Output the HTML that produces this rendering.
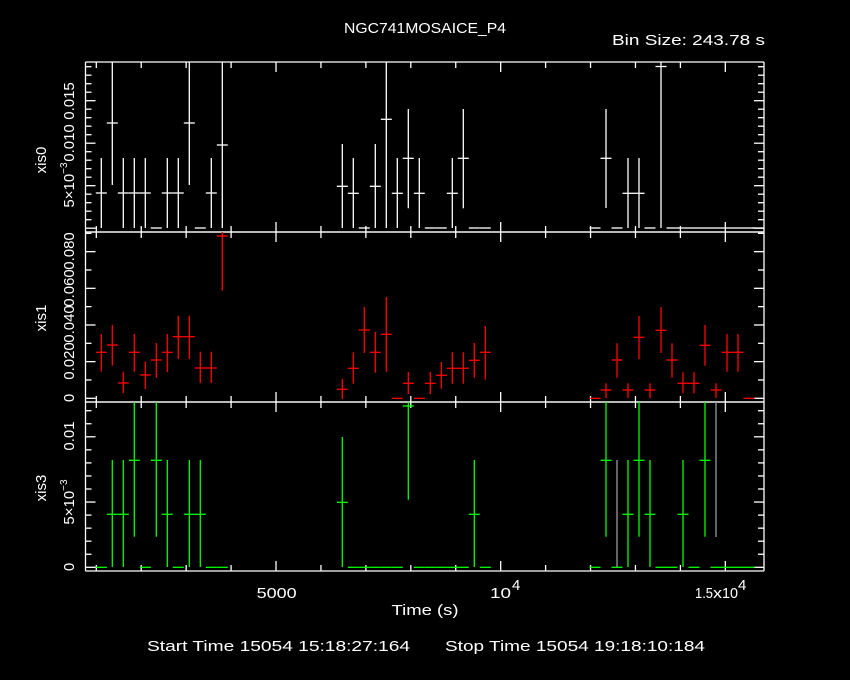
<!DOCTYPE html>
<html><head><meta charset="utf-8"><style>
html,body{margin:0;padding:0;background:#000;width:850px;height:680px;overflow:hidden}
svg{display:block}
text{font-family:"Liberation Sans",sans-serif;fill:#fff;font-size:15px}
</style></head><body>
<svg id="s" width="850" height="680" viewBox="0 0 850 680" xmlns="http://www.w3.org/2000/svg">
<text x="425" y="33" text-anchor="middle" textLength="162" lengthAdjust="spacingAndGlyphs">NGC741MOSAICE_P4</text>
<text x="612" y="45" textLength="153" lengthAdjust="spacingAndGlyphs">Bin Size: 243.78 s</text>
<text x="276.7" y="598" text-anchor="middle" textLength="40" lengthAdjust="spacingAndGlyphs">5000</text>
<text x="490" y="598" textLength="21" lengthAdjust="spacingAndGlyphs">10</text><text x="512" y="590" font-size="10">4</text>
<text x="695" y="598" textLength="18" lengthAdjust="spacingAndGlyphs">1.5</text>
<text x="713" y="598" textLength="9" lengthAdjust="spacingAndGlyphs">x</text>
<text x="722" y="598" textLength="16" lengthAdjust="spacingAndGlyphs">10</text>
<text x="738" y="590" font-size="10">4</text>
<text x="425" y="615" text-anchor="middle" textLength="67" lengthAdjust="spacingAndGlyphs">Time (s)</text>
<text x="147" y="651" textLength="263" lengthAdjust="spacingAndGlyphs">Start Time 15054 15:18:27:164</text>
<text x="445" y="651" textLength="260" lengthAdjust="spacingAndGlyphs">Stop Time 15054 19:18:10:184</text>
<text transform="translate(46,160) rotate(-90)" text-anchor="middle">xis0</text>
<text transform="translate(46,318) rotate(-90)" text-anchor="middle">xis1</text>
<text transform="translate(46,488) rotate(-90)" text-anchor="middle">xis3</text>
<text transform="translate(74,185) rotate(-90)" text-anchor="middle">5×10<tspan font-size="10" dy="-7">−3</tspan></text>
<text transform="translate(74,143) rotate(-90)" text-anchor="middle">0.010</text>
<text transform="translate(74,101) rotate(-90)" text-anchor="middle">0.015</text>
<text transform="translate(74,398) rotate(-90)" text-anchor="middle">0</text>
<text transform="translate(74,361) rotate(-90)" text-anchor="middle">0.020</text>
<text transform="translate(74,324) rotate(-90)" text-anchor="middle">0.040</text>
<text transform="translate(74,288) rotate(-90)" text-anchor="middle">0.060</text>
<text transform="translate(74,251) rotate(-90)" text-anchor="middle">0.080</text>
<text transform="translate(74,567) rotate(-90)" text-anchor="middle">0</text>
<text transform="translate(74,502) rotate(-90)" text-anchor="middle">5×10<tspan font-size="10" dy="-7">−3</tspan></text>
<text transform="translate(74,436) rotate(-90)" text-anchor="middle">0.01</text>
<g id="g" stroke-width="1.3" fill="none"></g>
</svg>
<script>
var g=document.getElementById('g'),o='';
function L(x1,y1,x2,y2,c){o+='<line x1="'+x1+'" y1="'+y1+'" x2="'+x2+'" y2="'+y2+'" stroke="'+c+'"/>';}
var X0=85.5,X1=764;
[[62,232],[232,402],[402,571]].forEach(function(p){
 L(X0,p[0],X1,p[0],'#fff');L(X0,p[1],X1,p[1],'#fff');L(X0,p[0],X0,p[1],'#fff');L(X1,p[0],X1,p[1],'#fff');
 for(var k=0;k<16;k++){var x=96.3+44.93*k;if(x>X1)break;var maj=(k==4||k==9||k==14);var l=maj?10:6;
  L(x,p[0],x,p[0]+l,'#fff');L(x,p[1],x,p[1]-l,'#fff');}
});
function yt(z,step,n,majEvery,top,bot){for(var i=0;i<n;i++){var y=z-step*i;if(y<top-0.5)break;if(y>bot)continue;var l=(i%majEvery==0)?10:6;L(X0,y,X0+l,y,'#fff');L(X1,y,X1-l,y,'#fff');}}
yt(228.2,8.5,30,5,62,232);
yt(398.3,18.33,10,2,232,402);
yt(567.3,13.05,20,5,402,571);
function P(x,y,t,b,c){L(x-5.5,y,x+5.5,y,c);if(t!=null)L(x,t,x,b,c);}
var W='#fff',R='#f00',G='#0f0';
var p1=[[101.3,193,158,228],[112.3,123,62,185],[123.3,193,158,228],[134.3,193,158,228],[145.3,193,158,228],[156.3,228],[167.3,193,158,228],[178.3,193,158,228],[189.3,123,62,185],[200.3,228],[211.3,193,158,228],[222.3,145,62,228],
[342.3,186.3,144,228],[353.3,193.3,158,228],[364.3,228],[375.3,186.3,144,228],[386.3,119.3,62,228],[397.3,193.3,158,228],[408.3,158.3,109,208.3],[419.3,193.3,158,228],[430.3,228],[441.3,228],[452.3,193.3,158,228],[463.3,158.3,109,208.3],[474.3,228],[485.3,228],
[595,228],[606,158.3,109,208],[617,228],[628,193.3,158,228],[639,193.3,158,228],[650,228],[661,66.5,62,228],[672,228],[683,228],[694,228],[705,228],[716,228],[727,228],[738,228],[749,228],[758,228]];
p1.forEach(function(a){P(a[0],a[1],a[2],a[3],W);});
var p2=[[101.3,352.3,334,371.7],[112.3,345,325,365.7],[123.3,383,371.7,393],[134.3,352.3,334,371.7],[145.3,375,361.7,389],[156.3,360,343,377.7],[167.3,352.3,334,372],[178.3,336.7,315.7,359],[189.3,336.7,315.7,359],[200.3,368,351.7,383],[211.3,368,351.7,383],[222.3,236,232,290.7],
[342.3,389.3,379,399],[353.3,368.3,352.3,383.7],[364.3,330,307,353],[375.3,352.3,332,372.7],[386.3,334.3,297,371.7],[397.3,398.3],[408.3,383.3,372,394],[419.3,398.3],[430.3,383.3,372,394],[441.3,375.3,362,388.7],[452.3,368.3,352.3,383.7],[463.3,368.3,352.3,383.7],[474.3,360.3,343,377.7],[485.3,352.3,326,379.7],
[595,398.3],[606,390,383.3,398],[617,360,343.3,377.7],[628,390,383.3,398],[639,337.3,316,359.3],[650,390,383.3,398],[661,330.3,307,353],[672,360,343.3,377.7],[683,383.3,372.3,393.3],[694,383.3,372.3,393.3],[705,345.3,325,365.7],[716,390,383.3,398],[727,352.3,334,371.7],[738,352.3,334,371.7],[749,398.3]];
p2.forEach(function(a){P(a[0],a[1],a[2],a[3],R);});
var p3=[[101.3,567.3],[112.3,514.3,460,567],[123.3,514.3,460,567],[134.3,460.3,402,536.7],[145.3,567.3],[156.3,460.3,402,536.7],[167.3,514.3,460,567],[178.3,567.3],[189.3,514.3,460,567],[200.3,514.3,460,567],[211.3,567.3],[222.3,567.3],
[342.3,502.3,437,567],[353.3,567.3],[364.3,567.3],[375.3,567.3],[386.3,567.3],[397.3,567.3],[408.3,406,402,499.7],[419.3,567.3],[430.3,567.3],[441.3,567.3],[452.3,567.3],[463.3,567.3],[474.3,514.3,460,567],[485.3,567.3],
[595,567.3],[606,460.3,402,536.7],[617,567.3],[628,514.3,460,567],[639,460.3,402,536.7],[650,514.3,460,567],[661,567.3],[672,567.3],[683,514.3,460,567],[694,567.3],[705,460.3,402,536.7],[716,567.3],[727,567.3],[738,567.3],[749,567.3]];
p3.forEach(function(a){P(a[0],a[1],a[2],a[3],G);});
L(617,460,617,567,'#999');L(716,402,716,537,'#999');
g.innerHTML=o;
</script>
</body></html>
